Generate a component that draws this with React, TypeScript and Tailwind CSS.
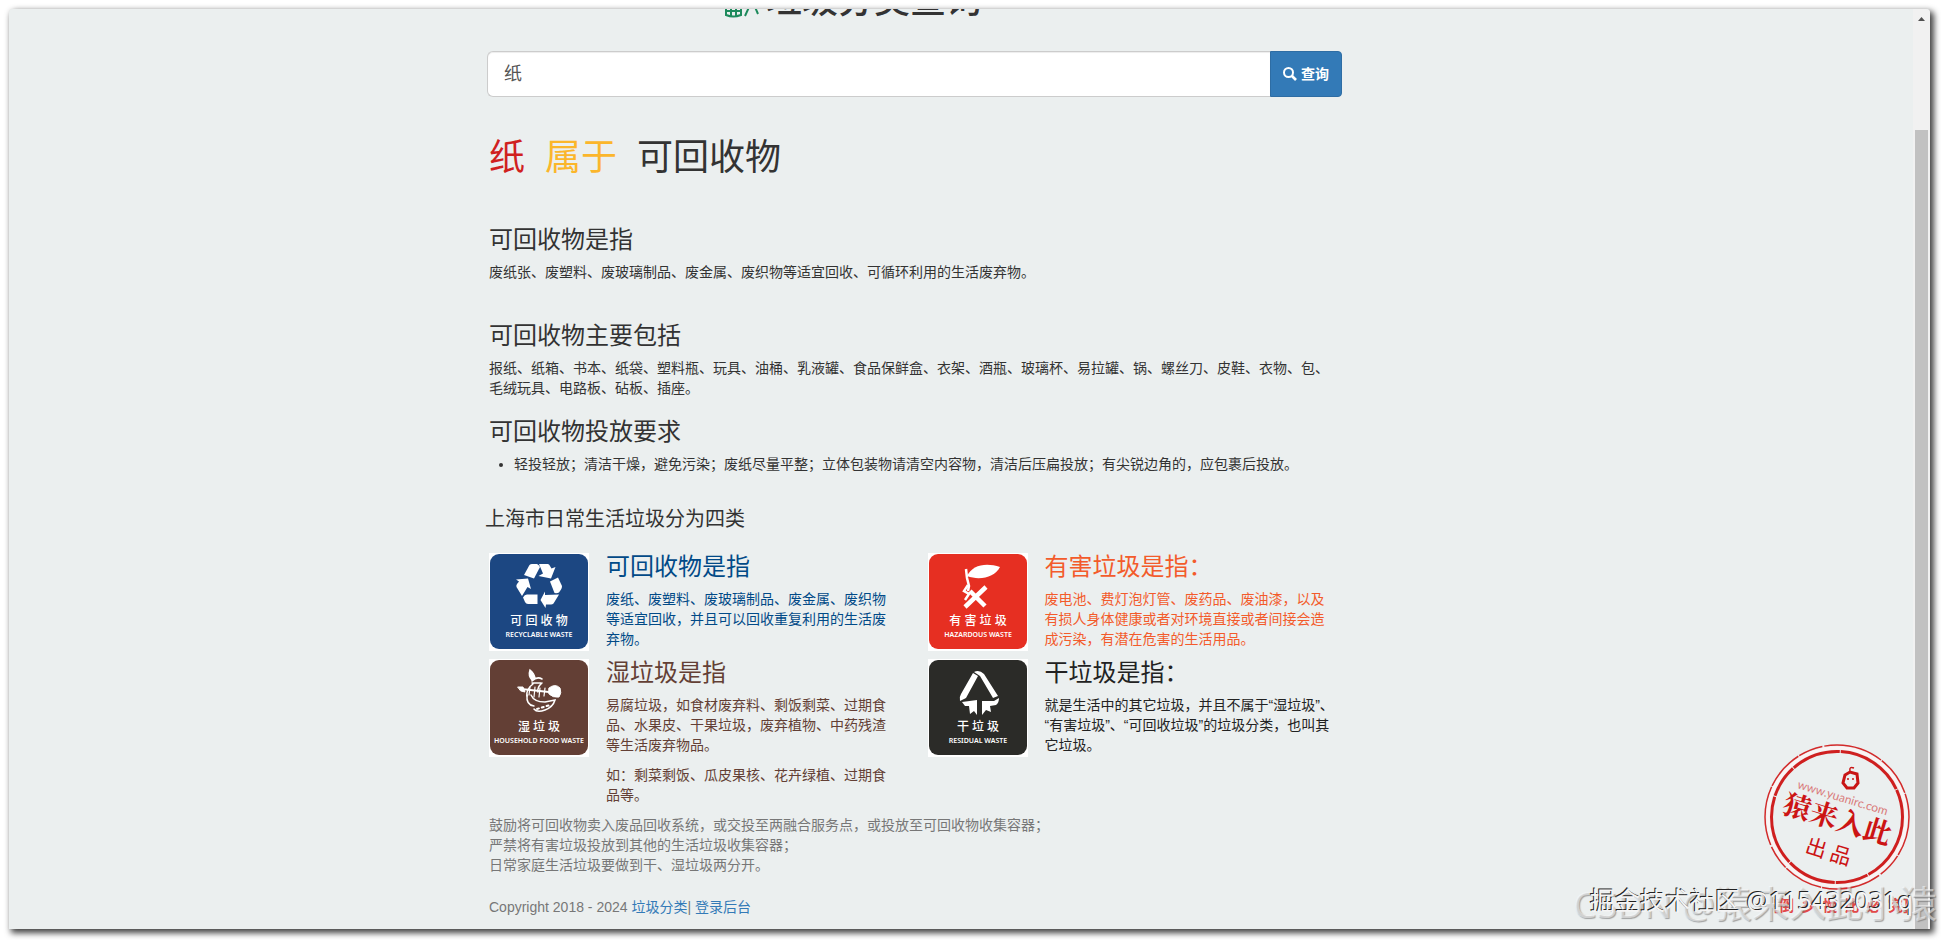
import { useState } from 'react'
import type { ReactNode } from 'react'

const CJK = '"Noto Sans", "Noto Sans CJK SC", sans-serif'

type TileProps = {
  color: string
  name: string
  english: string
  children: ReactNode
}

function Tile({ color, name, english, children }: TileProps) {
  return (
    <svg viewBox="0 0 100 98" className="w-[100px] h-[98px] shrink-0 bg-white" role="img" aria-label={english}>
      <rect x="1" y="1" width="98" height="95" rx="9" fill={color} />
      {children}
      <g fill="#fff" textAnchor="middle" fontFamily={CJK}>
        <text x="50" y="72" fontSize="12" fontWeight="500">{name}</text>
        <text x="50" y="84" fontSize="7" fontWeight="600">{english}</text>
      </g>
    </svg>
  )
}

function RecyclableIcon() {
  return (
    <g fill="#fff">
      <path d="M35 22 L40.5 12 Q41.5 11 43 11 L48 11 Q50 12 51 14 L45 25.5Z" />
      <path d="M50 11 L59 11 Q60.5 11.5 61 13 L62.5 15.5 L66.5 14 L62 25.5 L49.5 23 L54 20.5Z" />
      <path d="M61 28.5 L69 24.5 L73 33 Q73 35 72 36.5 L70 39.5 Q68 40.5 65.5 40Z" />
      <path d="M51.5 47 L56 38.5 L56 42 L70 41.5 L64.5 50.5 Q63.5 51.5 62 51.5 L57 51.5 L56.5 55Z" />
      <path d="M27 26.5 L39 25.5 L42 36 L38.5 34 L33 43 L27.5 34 Q27 32.5 28 31 L30 28.5Z" />
      <path d="M34 44.5 Q35.5 41.5 38 41.5 L48.5 41.5 L48.5 51 L39 51 Q37 51 36 49Z" />
    </g>
  )
}

function HazardousIcon() {
  return (
    <g fill="none" stroke="#fff">
      <path d="M39 23 C44 12 58 9 72 14 C67 24 52 28 39 23Z" fill="#fff" stroke="none" />
      <path d="M38 16 L39 25 L41 33 L40 38" strokeWidth="2.5" />
      <path d="M58 34 L37 54 M42 38 L57 53" strokeWidth="4.5" />
      <path d="M40 32 L36 38 L41 41 L37 47" strokeWidth="2.5" />
    </g>
  )
}

function FoodIcon() {
  return (
    <g fill="none" stroke="#fff" strokeWidth="1.5" strokeLinecap="round">
      <path d="M41 11 Q39 17 43 21 L46 19 Q45 14 41 11Z" fill="#fff" />
      <path d="M43 22 Q48 17 53 20 M43 24 L52 24 M44 25 Q37 30 38 37 M53 24 Q48 28 49 33" />
      <path d="M32 30 L60 33" strokeWidth="1.8" />
      <path d="M29 28 L34 28 L36 33 L32 32Z" fill="#fff" strokeWidth="1" />
      <path d="M41 28 L40 36 M46 28 L45 38 M51 29 L50 38 M56 29 L55 37" strokeWidth="1.2" />
      <path d="M60 29 Q66 24 71 29 Q73 34 70 38 Q64 39 60 35Z" fill="#fff" strokeWidth="1" />
      <path d="M38 36 Q37 46 45 47 M42 36 Q45 43 56 43 L66 41 Q64 48 56 51 Q48 54 45 50" />
      <path d="M48 50 L61 46" strokeWidth="2" strokeDasharray="2 3" />
    </g>
  )
}

function ResidualIcon() {
  return (
    <g fill="#fff">
      <path d="M45 14 L50 17 L38 39 L32 42 Q31 38 33 35Z" />
      <path d="M46 13 Q51 10 56 15 L70 37 L65 39 L52 17Z" />
      <path d="M34 43 L49 41 L49 56 L46 52 L42 55 L41 47 L37 47Z" />
      <path d="M54 42 L66 42 L71 39 Q71 44 68 46 L62 47 L63 53 L58 51 L54 56Z" />
    </g>
  )
}

const SECTIONS = [
  { title: '可回收物是指', body: '废纸张、废塑料、废玻璃制品、废金属、废织物等适宜回收、可循环利用的生活废弃物。', gap: 'mt-[47px]' },
  {
    title: '可回收物主要包括',
    body: '报纸、纸箱、书本、纸袋、塑料瓶、玩具、油桶、乳液罐、食品保鲜盒、衣架、酒瓶、玻璃杯、易拉罐、锅、螺丝刀、皮鞋、衣物、包、毛绒玩具、电路板、砧板、插座。',
    gap: 'mt-10',
  },
]

// \u200b allows a line break between 、 and an opening quote
const CATEGORIES = [
  {
    title: '可回收物是指',
    text: 'text-[#014a87]',
    body: ['废纸、废塑料、废玻璃制品、废金属、废织物等适宜回收，并且可以回收重复利用的生活废弃物。'],
    tile: { color: '#1c4782', name: '可 回 收 物', english: 'RECYCLABLE WASTE' },
    icon: <RecyclableIcon />,
  },
  {
    title: '有害垃圾是指：',
    text: 'text-[#f35b2b]',
    body: ['废电池、费灯泡灯管、废药品、废油漆，以及有损人身体健康或者对环境直接或者间接会造成污染，有潜在危害的生活用品。'],
    tile: { color: '#e62f22', name: '有 害 垃 圾', english: 'HAZARDOUS WASTE' },
    icon: <HazardousIcon />,
  },
  {
    title: '湿垃圾是指',
    text: 'text-[#633f35]',
    body: [
      '易腐垃圾，如食材废弃料、剩饭剩菜、过期食品、水果皮、干果垃圾，废弃植物、中药残渣等生活废弃物品。',
      '如：剩菜剩饭、瓜皮果核、花卉绿植、过期食品等。',
    ],
    tile: { color: '#633f35', name: '湿 垃 圾', english: 'HOUSEHOLD FOOD WASTE' },
    icon: <FoodIcon />,
  },
  {
    title: '干垃圾是指：',
    text: 'text-[#222222]',
    body: ['就是生活中的其它垃圾，并且不属于“湿垃圾”、\u200b“有害垃圾”、\u200b“可回收垃圾”的垃圾分类，也叫其它垃圾。'],
    tile: { color: '#2b2b28', name: '干 垃 圾', english: 'RESIDUAL WASTE' },
    icon: <ResidualIcon />,
  },
]

function SiteTitle() {
  return (
    <h1 className="-mt-7 ml-[236px] flex items-center gap-[5px] text-4xl leading-10 font-medium">
      <svg viewBox="0 0 36 36" className="size-9" fill="none" stroke="#1d8a5c" strokeWidth="2" aria-hidden="true">
        <path d="M1 16 H16 V32 Q8 35 1 32Z M1 28 H16 M6 16 V33 M11 16 V33" />
        <path d="M25 22 L20 33 M30 24 L33 31" />
      </svg>
      垃圾分类查询
    </h1>
  )
}

function SearchForm() {
  const [keyword, setKeyword] = useState('纸')

  return (
    <form className="mt-[30px] -ml-0.5 -mr-1.5 flex h-[46px]" onSubmit={(e) => e.preventDefault()}>
      <input
        type="text"
        aria-label="垃圾名称"
        value={keyword}
        onChange={(e) => setKeyword(e.target.value)}
        className="min-w-0 grow rounded-l-md border border-r-0 border-[#cccccc] bg-white px-4 text-lg text-[#555555] shadow-[inset_0_1px_1px_rgba(0,0,0,0.075)] outline-none"
      />
      <button
        type="submit"
        className="flex w-[72px] shrink-0 items-center justify-center gap-1 rounded-r border border-[#2e6da4] bg-[#337ab7] text-sm font-bold text-white"
      >
        <svg viewBox="0 0 14 14" className="size-[14px] shrink-0" fill="none" stroke="currentColor" aria-hidden="true">
          <circle cx="5.5" cy="5.5" r="4.5" strokeWidth="2" />
          <path d="M9 9 L13 13" strokeWidth="2.6" />
        </svg>
        查询
      </button>
    </form>
  )
}

function Stamp() {
  return (
    <svg viewBox="0 0 156 178" className="absolute right-[22px] bottom-[20px] h-[178px] w-[156px]" fill="none" aria-hidden="true">
      <circle cx="74" cy="75" r="72" stroke="#d32a2a" strokeWidth="1.5" strokeDasharray="40 1 25 2 60 1" />
      <circle cx="74" cy="75" r="69" stroke="#fbf3f3" strokeWidth="3" />
      <circle cx="74" cy="75" r="65.5" stroke="#cf1f1f" strokeWidth="3" strokeDasharray="70 1 33 1 50 1" />
      <path d="M82 33 L87 30 L94 32 L95 41 L91 46 L84 46 L80 41Z" stroke="#c81414" strokeWidth="3" />
      <path d="M87 29 Q86 24 91 26 M84 37 H86 M89 37 H91" stroke="#c81414" strokeWidth="1.5" />
      <g transform="rotate(17 74 75)" fill="#cc1414" textAnchor="middle">
        <text x="74" y="59" fontSize="12" opacity="0.55" fontFamily="Lato, sans-serif">www.yuanirc.com</text>
        <text x="75" y="87" fontSize="28" fontWeight="700" fontFamily='"Noto Serif CJK SC", "Noto Sans CJK SC", sans-serif'>猿来入此</text>
        <text x="76" y="118" fontSize="21" fontFamily='"Noto Sans CJK SC", sans-serif'>出 品</text>
      </g>
      <text x="78" y="169" textAnchor="middle" fontSize="15" fontWeight="700" fill="#e02020" opacity="0.8" fontFamily='"Noto Sans CJK SC", sans-serif'>
        {'[倒\u00a0\u00a0乡\u00a0\u00a0慢\u00a0\u00a0比\u00a0\u00a0必\u00a0\u00a0究]'}
      </text>
    </svg>
  )
}

function Scrollbar() {
  return (
    <div className="flex w-[17px] shrink-0 flex-col items-center bg-[#f1f1f1]" aria-hidden="true">
      <svg viewBox="0 0 7 4" className="mt-2 h-1 w-[7px]" fill="#505050">
        <path d="M3.5 0 L7 4 H0Z" />
      </svg>
      <div className="mt-[109px] w-[13px] grow bg-[#c1c1c1]" />
    </div>
  )
}

export default function App() {
  return (
    <div
      lang="zh-CN"
      className="relative h-screen overflow-hidden bg-white pt-[9px] pr-[11px] pb-[11px] pl-[9px] font-['Liberation_Sans','Noto_Sans_CJK_SC',sans-serif] text-sm leading-5 text-[#333333]"
    >
      <div className="flex h-full overflow-hidden rounded-t-sm bg-[#ebefef] shadow-[3px_3px_6px_1px_rgba(0,0,0,0.75)]">
        <main className="min-w-0 grow overflow-hidden">
          <div className="mx-auto max-w-[1170px] pr-[210px] pl-[113px]">
            <SiteTitle />
            <SearchForm />

            <h1 className="mt-10 flex gap-5 text-4xl leading-[42px]">
              <span className="text-[#d0211f]">纸</span>
              <span className="text-[#fbb62b]">属于</span>
              <span>可回收物</span>
            </h1>

            {SECTIONS.map((s) => (
              <section key={s.title} className={s.gap}>
                <h3 className="text-2xl leading-7">{s.title}</h3>
                <p className="mt-2">{s.body}</p>
              </section>
            ))}

            <section className="mt-5">
              <h3 className="text-2xl leading-7">可回收物投放要求</h3>
              <ul className="mt-2 list-disc pl-[25px]">
                <li>轻投轻放；清洁干燥，避免污染；废纸尽量平整；立体包装物请清空内容物，清洁后压扁投放；有尖锐边角的，应包裹后投放。</li>
              </ul>
            </section>

            <h4 className="mt-[33px] -ml-1 text-xl leading-6">上海市日常生活垃圾分为四类</h4>
            <div className="mt-[22px] grid grid-cols-2 gap-x-[30px] gap-y-2">
              {CATEGORIES.map((c) => (
                <article key={c.title} className="flex items-start gap-[17px]">
                  <Tile {...c.tile}>{c.icon}</Tile>
                  <div className={`min-w-0 grow ${c.text}`}>
                    <h3 className="text-2xl leading-7">{c.title}</h3>
                    {c.body.map((line, i) => (
                      <p key={line} className={i === 0 ? 'mt-2' : 'mt-[10px]'}>{line}</p>
                    ))}
                  </div>
                </article>
              ))}
            </div>

            <footer className="mt-[10px] text-[#777777]">
              <p>
                鼓励将可回收物卖入废品回收系统，或交投至两融合服务点，或投放至可回收物收集容器；
                <br />
                严禁将有害垃圾投放到其他的生活垃圾收集容器；
                <br />
                日常家庭生活垃圾要做到干、湿垃圾两分开。
              </p>
              <p className="mt-[22px]">
                Copyright 2018 - 2024 <a href="#home" className="text-[#337ab7]">垃圾分类</a>|{' '}
                <a href="#admin" className="text-[#337ab7]">登录后台</a>
              </p>
            </footer>
          </div>
        </main>
        <Scrollbar />
      </div>

      <Stamp />
      <div className="pointer-events-none absolute right-1 bottom-4 font-['Noto_Sans','Noto_Sans_CJK_SC',sans-serif] text-[37px] leading-10 whitespace-nowrap text-white/50 [text-shadow:1px_1px_1px_rgba(110,110,110,0.6)]">
        CSDN @猿来入此小猿
      </div>
      <div className="pointer-events-none absolute right-7 bottom-6 font-['Noto_Sans','Noto_Sans_CJK_SC',sans-serif] text-[25px] leading-8 whitespace-nowrap text-[#f4f4f4] [text-shadow:-1px_-1px_0_#222222]">
        掘金技术社区 @115432031q
      </div>
    </div>
  )
}
